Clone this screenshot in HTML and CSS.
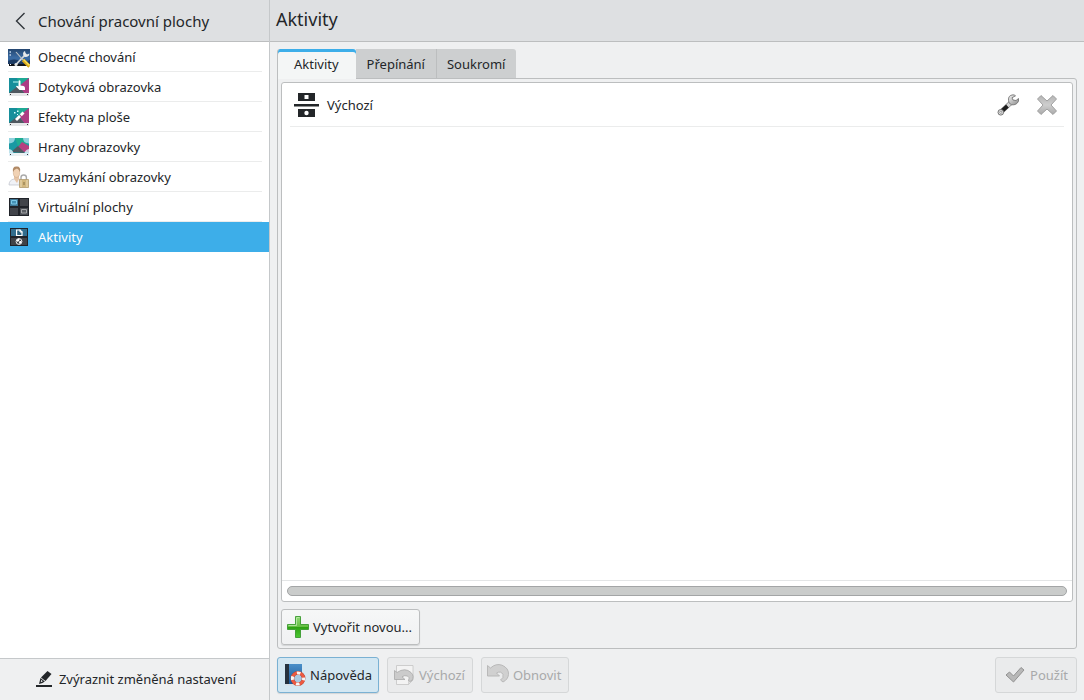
FILE: index.html
```html
<!DOCTYPE html>
<html lang="cs">
<head>
<meta charset="utf-8">
<title>Aktivity</title>
<link rel="stylesheet" href="styles.css">
</head>
<body>
<div class="app">
  <aside class="sidebar">
    <header class="sidebar-header">
      <button class="back" type="button">
        <svg class="back-icon" viewBox="0 0 22 22" aria-hidden="true"><path d="M14.500 3L6.500 11L14.500 19" fill="none" stroke="#31363b" stroke-width="1.400"/></svg>
        <span>Chování pracovní plochy</span>
      </button>
    </header>
    <nav class="nav">
      <a class="nav-item" href="#general">
        <svg class="icon" viewBox="0 0 22 22" aria-hidden="true">
          <defs><linearGradient id="sky" x1="0" y1="0" x2="0" y2="1"><stop offset="0" stop-color="#24466f"/><stop offset=".6" stop-color="#3c6da6"/><stop offset="1" stop-color="#254c7c"/></linearGradient></defs>
          <path d="M0 3h22v15H0z" fill="url(#sky)"/><path d="M0 15q6-3 12 0t10-1v4H0z" fill="#1c3a63"/><path d="M1 18h20v2H1z" fill="#101318"/>
          <path d="M1.500 5h1.500v2H1.500zM1.500 8h1.500v2H1.500z" fill="#9fb7d3"/><path d="M2 18h1v1H2z" fill="#fff"/>
          <path d="M8 18.500L17 9" stroke="#d5d8da" stroke-width="1.800"/><path d="M17 5q-3 1.500-1.500 4.500t5.500 0l.5-2-2.500 1-1.500-1.500z" fill="#e8eaeb"/><circle cx="8" cy="18.500" r="1.600" fill="#e6e8e8"/>
          <path d="M8 6l7 8" stroke="#c3c6c8" stroke-width="1.100"/><path d="M15 14l6.500 6.500" stroke="#d9a916" stroke-width="3.400"/><path d="M15.500 13.500l6 6" stroke="#f7df60" stroke-width="1.200"/>
        </svg><span class="nav-label">Obecné chování</span></a>
      <a class="nav-item" href="#touchscreen">
        <svg class="icon" viewBox="0 0 22 22" aria-hidden="true">
          <path d="M1 2h20v16H1z" fill="#168f9b"/><path d="M9 2h12l-9 9z" fill="#1ea994"/><path d="M21 2v15H16L11 10z" fill="#ad3d83"/><path d="M1 17l9-7 7 8H1z" fill="#505960"/><path d="M1 17h20V20H1z" fill="#e5e7e8"/><path d="M2 18h1v1H2zM19 18h1v1h-1z" fill="#333"/>
          <path d="M10.500 5q1-1.500 2 0v4.500l3 .5q1.500.5 1.500 2V14h-5.500l-3.500-3.500q.5-1.500 2.500 0z" fill="#fff"/><path d="M5 5h5v2H5z" fill="#8ddcda" fill-opacity=".7"/>
        </svg><span class="nav-label">Dotyková obrazovka</span></a>
      <a class="nav-item" href="#effects">
        <svg class="icon" viewBox="0 0 22 22" aria-hidden="true">
          <path d="M1 2h20v16H1z" fill="#168f9b"/><path d="M9 2h12l-9 9z" fill="#1ea994"/><path d="M21 2v15H16L11 10z" fill="#ad3d83"/><path d="M1 17l9-7 7 8H1z" fill="#505960"/><path d="M1 17h20V20H1z" fill="#e5e7e8"/><path d="M2 18h1v1H2zM19 18h1v1h-1z" fill="#333"/>
          <path d="M8 14l4-4" stroke="#fff" stroke-width="2.800"/><path d="M12.800 9.200l2.700-2.700" stroke="#fff" stroke-width="2.800"/><path d="M6 6h1.500v1.500H6zM9 4.500h1.500V6H9zM9 8h1v1H9z" fill="#d9ffff"/>
        </svg><span class="nav-label">Efekty na ploše</span></a>
      <a class="nav-item" href="#edges">
        <svg class="icon" viewBox="0 0 22 22" aria-hidden="true">
          <path d="M1 2h20v16H1z" fill="#1999a3"/><path d="M7 2h8l5 7-6-2-4 3z" fill="#20ac92"/><path d="M14 6l7 4v6h-5l-6-5z" fill="#b64080"/><path d="M3 16l7-6 7 7z" fill="#505960"/><path d="M1 17h20v3H1z" fill="#eef1f2"/>
          <path d="M1 2h6q0 5-6 5.500zM21 2h-6q0 5 6 5.500z" fill="#a4dbe8" fill-opacity=".85"/><path d="M1 13q5 1 5 7H1zM21 13q-5 1-5 7h5z" fill="#dceef8" fill-opacity=".85"/><path d="M2 18h1v1H2zM19 18h1v1h-1z" fill="#333"/>
        </svg><span class="nav-label">Hrany obrazovky</span></a>
      <a class="nav-item" href="#lock">
        <svg class="icon" viewBox="0 0 22 22" aria-hidden="true">
          <path d="M1 19q0-5 5-6l2-1 3 1q5 1 5 6z" fill="#f0f2f7" stroke="#bdc2ca" stroke-width=".7"/><path d="M6 13l3 4 2-4v-3H6z" fill="#e6c4a6"/><ellipse cx="8.500" cy="6.500" rx="3.200" ry="4.800" fill="#f1d2b4" stroke="#c9a584" stroke-width=".5"/><path d="M5 6Q4 0 9 .500q4 0 3 5.500-1-3-3-3.500-3 .5-4 3.500z" fill="#b18a66"/>
          <path d="M13 14v-2.500q0-2.500 2.700-2.500t2.700 2.500V14" fill="none" stroke="#aaa" stroke-width="1.400"/><path d="M11.500 13.500h9v8h-9z" fill="#d2b77e" stroke="#b29c6e" stroke-width=".8"/><path d="M13 14v7M19 14v7" stroke="#eadbb8" stroke-width="1"/><path d="M15.300 16h1.400v3h-1.400z" fill="#9b8557"/>
        </svg><span class="nav-label">Uzamykání obrazovky</span></a>
      <a class="nav-item" href="#desktops">
        <svg class="icon" viewBox="0 0 22 22" aria-hidden="true">
          <path d="M1 2h20v18H1z" fill="#202329"/><path d="M2 3h8v7H2z" fill="#3d7694"/><path d="M3.500 4.500h5v3.500h-5z" fill="#4592b6" stroke="#7cc9e9" stroke-width="1"/><path d="M12 3h8v7h-8zM2 12h8v7H2z" fill="#41444a"/><path d="M12 12h8v7h-8z" fill="#4b4e54"/><path d="M13.500 13.500h5v3.500h-5z" fill="#5c5f65" stroke="#a2a4a7"/>
        </svg><span class="nav-label">Virtuální plochy</span></a>
      <a class="nav-item nav-item-current" href="#activities" aria-current="page">
        <svg class="icon" viewBox="0 0 22 22" aria-hidden="true">
          <path d="M2 2h18v18H2z" fill="#202329"/><path d="M3 3h16v7H3z" fill="#326d8d"/><path d="M3 12h16v7H3z" fill="#404348"/><path d="M8.600 4h3.400l2 2v3.500H8.600z" fill="#2d647f" stroke="#fff" stroke-width="1.200"/><path d="M12 3.500V6h2.500" fill="none" stroke="#fff"/>
          <circle cx="11" cy="15.500" r="2.900" fill="#404348" stroke="#fff" stroke-width=".9"/><path d="M8.500 14l2-1.500 1.200.5-.7 2-1.500 1zM11.500 15l2 0-.5 2-1.200 1-.8-1.500z" fill="#fff"/>
        </svg><span class="nav-label">Aktivity</span></a>
    </nav>
    <footer class="sidebar-footer">
      <button class="highlight" type="button">
        <svg class="highlight-icon" viewBox="0 0 16 16" aria-hidden="true"><path d="M0 14h16v2H0z" fill="#232629"/><path d="M11.500 0L15.500 3 9.500 10 5 6.500z" fill="#232629"/><path d="M4.500 7L8.800 10.500 6.500 12 3 13z" fill="#232629"/><path d="M5.200 8.800L6.800 10.200 4.800 11.200z" fill="#eff0f1"/></svg>
        <span>Zvýraznit změněná nastavení</span>
      </button>
    </footer>
  </aside>

  <main class="main">
    <header class="main-header"><h1 class="title">Aktivity</h1></header>
    <div class="content">
      <div class="tabs" role="tablist">
        <button class="tab tab-active" type="button" role="tab" aria-selected="true">Aktivity</button>
        <button class="tab" type="button" role="tab" aria-selected="false">Přepínání</button>
        <button class="tab" type="button" role="tab" aria-selected="false">Soukromí</button>
      </div>
      <section class="panel" role="tabpanel">
        <div class="list">
          <div class="activity">
            <svg class="activity-icon" viewBox="0 0 25 24" aria-hidden="true"><path d="M4 0h17v8H4zM0 11h25v2.500H0zM4 16h17v8H4z" fill="#232629"/><path d="M10.500 2h4v4h-4z" fill="#fff"/><circle cx="12.500" cy="20" r="2.200" fill="#fff"/></svg>
            <span class="activity-name">Výchozí</span>
            <button class="tool" type="button" aria-label="Nastavit">
              <svg class="tool-icon" viewBox="0 0 24 24" aria-hidden="true">
                <defs><linearGradient id="steel" x1="0" y1="0" x2="1" y2="1"><stop offset="0" stop-color="#f4f4f4"/><stop offset="1" stop-color="#8c8c8c"/></linearGradient></defs>
                <path d="M6 18L15 9.500" stroke="#8b8b8b" stroke-width="4.600"/><path d="M6 18L11.500 13" stroke="#1d1d1d" stroke-width="3.800"/><path d="M11.500 13L15 9.500" stroke="#d4d4d4" stroke-width="3.200"/>
                <path d="M17 1.800q-5 .5-4.500 5.500l.5 2.500 2.500 2q5.500.5 7-3.800v-2.500l-2.500 2-3-.5-1-2.200 3.500-2q-1-1-2.500-1z" fill="url(#steel)" stroke="#686868" stroke-width=".8"/><circle cx="4.800" cy="19.300" r="2.800" fill="#e4e4e4" stroke="#666" stroke-width=".9"/><circle cx="4.800" cy="19.300" r="1.100" fill="#fff" stroke="#777" stroke-width=".7"/>
              </svg>
            </button>
            <button class="tool" type="button" aria-label="Smazat" disabled>
              <svg class="tool-icon" viewBox="0 0 24 24" aria-hidden="true">
                <defs><linearGradient id="cross" x1="0" y1="0" x2="0" y2="1"><stop offset="0" stop-color="#b4b4b4"/><stop offset=".5" stop-color="#cecece"/><stop offset="1" stop-color="#a9a9a9"/></linearGradient></defs>
                <path d="M6 2.500l6 5.500 6-5.500 3.500 3.500-5.500 6 5.500 6-3.500 3.500-6-5.500-6 5.500L2.500 18l5.500-6-5.500-6z" fill="url(#cross)" stroke="#999" stroke-width=".9" stroke-linejoin="round"/>
              </svg>
            </button>
          </div>
          <div class="scroll-area"><div class="scroll-thumb"></div></div>
        </div>
        <button class="btn btn-create" type="button">
          <svg class="btn-icon" viewBox="0 0 22 22" aria-hidden="true">
            <defs><linearGradient id="green" x1="0" y1="0" x2="0" y2="1"><stop offset="0" stop-color="#91da76"/><stop offset=".48" stop-color="#65bf43"/><stop offset=".52" stop-color="#2ea313"/><stop offset="1" stop-color="#4cc832"/></linearGradient></defs>
            <path d="M8.500.500h5v8h8v5h-8v8h-5v-8h-8v-5h8z" fill="url(#green)" stroke="#3b9a30" stroke-width=".9" stroke-linejoin="round"/><path d="M9.500 1.500h3M9.500 2v7.500H1.500" fill="none" stroke="#c9efbb" stroke-width=".7"/>
          </svg><span>Vytvořit novou...</span></button>
      </section>
      <footer class="actions">
        <button class="btn btn-help" type="button">
          <svg class="btn-icon" viewBox="0 0 22 22" aria-hidden="true">
            <defs><linearGradient id="book" x1="0" y1="0" x2="0" y2="1"><stop offset="0" stop-color="#498fc9"/><stop offset="1" stop-color="#1c5898"/></linearGradient></defs>
            <path d="M1 0h17v20H1z" fill="url(#book)"/><path d="M1 0h4v21H1z" fill="#26323f"/><path d="M1 20h15v1.500H1z" fill="#d8dfe5"/>
            <circle cx="14" cy="14.500" r="4.200" fill="#a9c8e2"/><circle cx="14" cy="14.500" r="5.600" fill="none" stroke="#b04436" stroke-width="3.600"/><circle cx="14" cy="14.500" r="5.600" fill="none" stroke="#ee5a41" stroke-width="2.800"/><circle cx="14" cy="14.500" r="5.600" fill="none" stroke="#f8f5f4" stroke-width="3" stroke-dasharray="3.600 5.196" stroke-dashoffset="1.800"/>
          </svg><span>Nápověda</span></button>
        <button class="btn" type="button" disabled>
          <svg class="btn-icon" viewBox="0 0 22 22" aria-hidden="true"><path d="M3.500 1.500h16.500v14.500l-4.500 4.500h-12z" fill="#f3f3f3" stroke="#c4c4c4" stroke-width=".8"/><path d="M20 16l-4.500 4.500V16z" fill="#e2e2e2" stroke="#c4c4c4" stroke-width=".6"/><path d="M1.500 6.500l2.500 2q8-5.500 14 0 4 4 .500 8.500-2 1-3-.5 2-3-1-4.500-3-1-5.500.8L12 15.500H1.500z" fill="#cbcbcb" stroke="#a8a8a8" stroke-width=".8"/></svg><span>Výchozí</span></button>
        <button class="btn" type="button" disabled>
          <svg class="btn-icon" viewBox="0 0 22 22" aria-hidden="true"><path d="M.500 1.500l3 2.500Q9-1 15 1.200q7 3 6.500 9.300-.5 5-5.500 7.500l-2.500-2q3.500-2 2.500-5.500-2-4-6.500-1.500l3 3H.500z" fill="#d0d0d0" stroke="#b4b4b4" stroke-width=".9"/></svg><span>Obnovit</span></button>
        <button class="btn btn-apply" type="button" disabled>
          <svg class="btn-icon" viewBox="0 0 22 22" aria-hidden="true"><path d="M2 11l3.500-3 4 4 7.500-8.500 3 2.500L9.500 18z" fill="#b8b8b8" stroke="#929292" stroke-width="1" stroke-linejoin="round"/></svg><span>Použít</span></button>
      </footer>
    </div>
  </main>
</div>
</body>
</html>
```
FILE: styles.css
```css
* { box-sizing: border-box; }
body {
  margin: 0;
  font: 13px/18px "Noto Sans", sans-serif;
  color: #232629;
  background: #eff0f1;
}
button {
  font: inherit;
  color: inherit;
  margin: 0;
  padding: 0;
  border: 0;
  background: none;
}
svg { display: block; flex: none; }

.app { display: grid; grid-template-columns: 270px 1fr; min-height: 100vh; }

.sidebar { display: flex; flex-direction: column; background: #fff; border-right: 1px solid #c5c8ca; }
.sidebar-header, .main-header {
  display: flex;
  align-items: center;
  height: 42px;
  background: #dee0e2;
  border-bottom: 1px solid #bcbebf;
}
.back { display: flex; align-items: center; gap: 6px; padding-left: 10px; font-size: 15px; line-height: 20px; }
.back-icon { width: 22px; height: 22px; }
.nav { flex: 1; }
.nav-item {
  display: flex;
  align-items: center;
  height: 30px;
  padding-left: 8px;
  padding-right: 7px;
  gap: 8px;
  color: #232629;
  text-decoration: none;
  background: linear-gradient(#ebecec, #ebecec) 8px 100% / calc(100% - 15px) 1px no-repeat;
}
.nav-item-current { background: #3daee9; color: #fcfcfc; }
.icon, .btn-icon { width: 22px; height: 22px; }
.sidebar-footer {
  display: flex;
  justify-content: center;
  height: 42px;
  padding-bottom: 2px;
  background: #eff0f1;
  border-top: 1px solid #c5c8ca;
}
.highlight { display: flex; align-items: center; gap: 7px; padding-left: 3px; }
.highlight-icon { width: 16px; height: 16px; }

.main { display: flex; flex-direction: column; min-width: 0; }
.title { margin: 0; padding: 0 0 3px 6px; font-size: 18px; line-height: 24px; font-weight: 400; }
.content { flex: 1; display: flex; flex-direction: column; padding: 7px; }

.tabs { display: flex; align-items: flex-start; position: relative; z-index: 1; margin-bottom: -1px; }
.tab {
  height: 29px;
  padding: 0 11px 0 10px;
  background: #cdcfd0;
  border-left: 1px solid #bcbebf;
}
.tab:last-child { border-top-right-radius: 3px; }
.tab-active {
  height: 30px;
  padding: 0 17px 0 16px;
  background: #f4f6f6;
  box-shadow: inset 0 3px #3daee9;
  border-radius: 3px 3px 0 0;
}
.tab-active + .tab { border-left-color: #cdcfd0; }

.panel {
  flex: 1;
  display: flex;
  flex-direction: column;
  align-items: flex-start;
  gap: 7px;
  padding: 3px;
  border: 1px solid #bcbebf;
  border-radius: 0 3px 3px 3px;
}
.list {
  flex: 1;
  align-self: stretch;
  display: flex;
  flex-direction: column;
  justify-content: space-between;
  background: #fff;
  border: 1px solid #bcbebf;
  border-radius: 3px;
}
.activity {
  display: flex;
  align-items: center;
  height: 44px;
  margin: 0 8px;
  padding: 0 5px 0 4px;
  border-bottom: 1px solid #ebecec;
}
.activity-icon { width: 25px; height: 24px; }
.activity-name { flex: 1; padding-left: 8px; }
.tool { margin-left: 15px; }
.tool-icon { width: 24px; height: 24px; }
.scroll-area { padding: 5px; border-top: 1px solid #e3e5e6; }
.scroll-thumb { height: 10px; background: #cacccb; border: 1px solid #a3a5a6; border-radius: 5px; }

.btn {
  display: flex;
  align-items: center;
  gap: 4px;
  height: 36px;
  padding: 0 7px 0 5px;
  border: 1px solid #bcbebf;
  border-radius: 3px;
  background: linear-gradient(#f6f7f7, #f0f1f2);
  box-shadow: 0 1px 1px #d2d4d5;
}
.btn-help { padding: 0 6px; background: #d3e7f2; border-color: #7ab1d3; }
.btn:disabled { color: #a8a9aa; background: #eaebec; border-color: #d5d7d8; box-shadow: none; }
.actions { display: flex; gap: 8px; padding-top: 8px; }
.btn-apply { margin-left: auto; padding: 0 8px; }
```
